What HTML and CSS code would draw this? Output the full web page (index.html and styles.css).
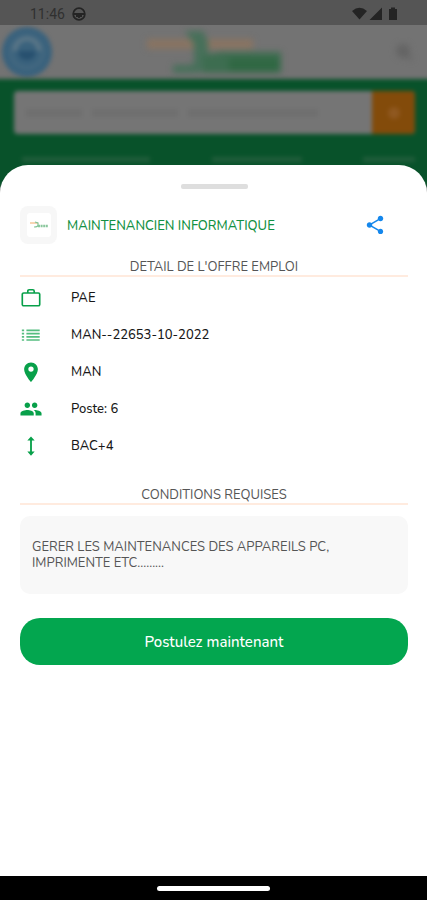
FILE: index.html
```html
<!DOCTYPE html>
<html lang="fr">
<head>
<meta charset="utf-8">
<meta name="viewport" content="width=device-width, initial-scale=1">
<title>Offre emploi</title>
<link rel="stylesheet" href="styles.css">
</head>
<body>
<div class="statusbar">
  <div class="status-left">
    <span class="clock">11:46</span>
    <svg width="14" height="14" viewBox="0 0 14 14" aria-hidden="true"><circle cx="7" cy="7" r="5.8" fill="none" stroke="#242424" stroke-width="1.8"/><path d="M1 7h12M4 9h6M7 7v4" stroke="#242424" stroke-width="1.8"/></svg>
  </div>
  <svg class="signals" width="47" height="14" viewBox="0 0 47 14" aria-hidden="true"><path d="M0 4Q7.500-2.500 15 4L7.500 12.500Z M30 0.500V13H17.500Z M37 2h2V.5h4V2h2v11h-8z" fill="#242424"/></svg>
</div>
<div class="backdrop" aria-hidden="true">
  <div class="appbar">
    <svg class="avatar" width="50" height="50" viewBox="0 0 50 50"><circle cx="25" cy="25" r="25" fill="#3a627d"/><path d="M13 24a12 12 0 0 1 24 0" fill="none" stroke="#5c7788" stroke-width="4"/><circle cx="25" cy="25" r="16" fill="none" stroke="#4a6c82" stroke-width="2"/><path d="M16 24h18q-1 9-9 9t-9-9z" fill="#27506f"/></svg>
    <svg class="brand" width="138" height="50" viewBox="0 0 138 50"><path d="M2 12h106v10H2z" fill="#897462"/><path d="M40 4h18l5 11v22q-1 9-12 9H28V38h16q6 0 5-5V17z" fill="#47705a"/><path d="M58 28l18-3h60v21H58z" fill="#3d6d50"/><path d="M84 31h50v13H84z" fill="#306843"/></svg>
    <svg class="glass" width="22" height="22" viewBox="0 0 22 22"><circle cx="10" cy="10" r="7" fill="#646464"/><path d="M14 14l5 5" stroke="#646464" stroke-width="3"/></svg>
  </div>
  <div class="hero">
    <div class="searchbar"><div class="query"><span></span><span></span><span></span></div><div class="go"><i></i></div></div>
    <div class="tabs"><span></span><span></span><span></span></div>
  </div>
</div>
<main class="sheet">
  <div class="handle"></div>
  <header class="offer">
    <div class="thumb"><svg width="24" height="24" viewBox="0 0 24 24" aria-hidden="true"><rect width="24" height="24" rx="3" fill="#fff"/><path d="M3 10h8" stroke="#f6c79b" stroke-width="1.500"/><path d="M8 9l3 1v2q0 2-4 2" fill="none" stroke="#83c497" stroke-width="1.200"/><path d="M11 13h10" stroke="#8ac79d" stroke-width="2.500" stroke-dasharray="2 .6"/></svg></div>
    <h1>MAINTENANCIEN INFORMATIQUE</h1>
    <button class="share" type="button" aria-label="Partager"><svg width="22" height="22" viewBox="0 0 24 24"><path d="M18 16.080c-.76 0-1.440.3-1.960.77L8.910 12.700c.05-.23.09-.46.09-.7s-.04-.47-.09-.7l7.050-4.110c.54.5 1.250.81 2.040.81 1.660 0 3-1.340 3-3s-1.340-3-3-3-3 1.340-3 3c0 .24.04.47.09.7L8.040 9.810C7.500 9.310 6.790 9 6 9c-1.660 0-3 1.340-3 3s1.340 3 3 3c.79 0 1.500-.31 2.040-.81l7.120 4.160c-.05.21-.08.43-.08.65 0 1.610 1.310 2.920 2.920 2.920s2.920-1.310 2.920-2.920-1.310-2.920-2.920-2.920z" fill="#1487ec"/></svg></button>
  </header>
  <h2>DETAIL DE L'OFFRE EMPLOI</h2>
  <ul class="details">
    <li><svg viewBox="0 0 24 24" aria-hidden="true"><rect x="2.500" y="6.500" width="19" height="14" rx="1.500" fill="none" stroke="#08a04a" stroke-width="1.800"/><path d="M8.500 6.500V4.500q0-1.500 1.500-1.500h4q1.500 0 1.500 1.500v2" fill="none" stroke="#08a04a" stroke-width="1.800"/></svg>PAE</li>
    <li><svg viewBox="0 0 24 24" aria-hidden="true"><path d="M2 7h2.500M2 10.500h2.500M2 14h2.500M2 17.500h2.500M7 7h14.500M7 10.500h14.500M7 14h14.500M7 17.500h14.500" stroke="#55bd80" stroke-width="1.800"/></svg>MAN--22653-10-2022</li>
    <li><svg viewBox="0 0 24 24" aria-hidden="true"><path d="M12 1.500c-4.300 0-7.500 3.300-7.500 7.500 0 5.600 7.500 14 7.500 14s7.500-8.400 7.500-14c0-4.200-3.200-7.500-7.500-7.500zm0 10.200a2.900 2.900 0 1 1 0-5.800 2.900 2.900 0 0 1 0 5.800z" fill="#08a04a"/></svg>MAN</li>
    <li><svg viewBox="0 0 24 24" aria-hidden="true"><path d="M16 11c1.660 0 2.990-1.340 2.990-3S17.660 5 16 5s-3 1.340-3 3 1.340 3 3 3zm-8 0c1.660 0 2.990-1.340 2.990-3S9.660 5 8 5 5 6.340 5 8s1.340 3 3 3zm0 2c-2.330 0-7.500 1.170-7.500 3.500V19h14.500v-2.500C15 14.170 10.330 13 8 13zm8 0c-.29 0-.62.02-.97.05 1.160.84 1.970 1.970 1.970 3.450V19h6.500v-2.500c0-2.330-5.170-3.500-7.500-3.500z" fill="#08a04a"/></svg>Poste: 6</li>
    <li><svg viewBox="0 0 24 24" aria-hidden="true"><path d="M12 4v16" stroke="#08a04a" stroke-width="2"/><path d="M12 1.500l4 4.500H8zM12 22.500l4-4.500H8z" fill="#08a04a"/></svg>BAC+4</li>
  </ul>
  <h2>CONDITIONS REQUISES</h2>
  <p class="conditions">GERER LES MAINTENANCES DES APPAREILS PC, IMPRIMENTE ETC.........</p>
  <button class="apply" type="button">Postulez maintenant</button>
</main>
<div class="navbar"><div class="pill"></div></div>
</body>
</html>
```
FILE: styles.css
```css
* { box-sizing: border-box; }
body {
  margin: 0;
  min-height: 100vh;
  display: flex;
  flex-direction: column;
  background: #747474;
  font-family: "Nunito", "Open Sans", sans-serif;
}
.statusbar {
  height: 25px;
  padding: 2px 28px 0 30px;
  display: flex;
  justify-content: space-between;
  align-items: center;
  background: #555;
  color: #303030;
}
.status-left { display: flex; align-items: center; gap: 7px; }
.clock { font: 14px/18px Roboto, sans-serif; }
.backdrop { height: 172px; overflow: hidden; background: #737373; }
.appbar {
  height: 54px;
  padding: 0 12px 0 2px;
  display: grid;
  grid-template-columns: 50px 1fr 22px;
  align-items: center;
}
.brand { justify-self: center; margin-right: 18px; }
.appbar svg { filter: blur(3px); }
.appbar .avatar { filter: blur(2px); }
.hero {
  height: 108px;
  margin: 0 -8px;
  padding: 12px 20px 0 22px;
  background: #08522a;
  filter: blur(2px);
}
.searchbar { display: flex; height: 43px; border-radius: 4px; overflow: hidden; background: #757575; }
.query { flex: 1; display: flex; align-items: center; gap: 10px; padding-left: 12px; }
.query span { width: 56px; height: 8px; background: #6f6f6f; }
.query span:nth-child(2) { width: 86px; }
.query span:nth-child(3) { width: 130px; }
.go { width: 43px; display: grid; place-items: center; background: #834b0a; }
.go i { width: 12px; height: 12px; border-radius: 6px; background: #8f5820; }
.tabs { display: flex; justify-content: space-between; margin-top: 23px; padding-left: 8px; }
.tabs span { width: 128px; height: 5px; background: #215d3b; }
.tabs span:nth-child(2) { width: 90px; }
.tabs span:nth-child(3) { width: 52px; }
.sheet {
  position: relative;
  flex: 1;
  margin-top: -32px;
  padding: 19px 19px 24px 20px;
  border-radius: 28px 28px 0 0;
  background: #fff;
}
.handle { width: 67px; height: 5px; margin: 0 auto; border-radius: 2px; background: #dedede; }
.offer { display: flex; align-items: center; height: 38px; margin-top: 17px; }
.thumb {
  width: 37px;
  height: 38px;
  display: grid;
  place-items: center;
  border-radius: 8px;
  background: #f7f7f7;
}
h1 { flex: 1; margin: 0 0 0 10px; padding-top: 2px; font-size: 13px; line-height: 20px; font-weight: 500; color: #139143; }
.share { display: grid; margin-right: 22px; padding: 0; border: 0; background: none; }
h2 {
  margin: 12px 0 0;
  height: 21px;
  border-bottom: 2px solid #ffebdf;
  text-align: center;
  font-size: 13px;
  line-height: 22px;
  font-weight: 400;
  color: #555;
}
.details { list-style: none; margin: 2px 0 20px; padding: 0; }
.details li { display: flex; align-items: center; gap: 29px; height: 37px; font-size: 13px; line-height: 18px; font-weight: 500; color: #181818; }
.details svg { width: 22px; height: 22px; }
.conditions {
  margin: 11px 0 24px;
  padding: 23px 12px;
  border-radius: 10px;
  background: #f8f8f8;
  font-size: 13px;
  line-height: 16px;
  color: #555;
}
.apply {
  display: block;
  width: 100%;
  height: 47px;
  border: 0;
  border-radius: 20px;
  background: #03a64f;
  color: #fff;
  font-family: inherit;
  font-size: 15px;
  font-weight: 500;
}
.navbar { height: 24px; display: grid; place-items: center; background: #000; }
.pill { width: 113px; height: 5px; border-radius: 3px; background: #fff; }
```
